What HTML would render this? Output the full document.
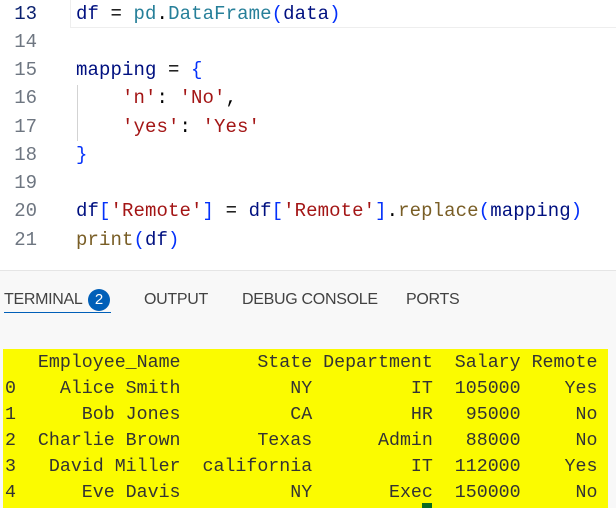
<!DOCTYPE html>
<html><head><meta charset="utf-8"><style>
html,body{margin:0;padding:0;width:616px;height:508px;overflow:hidden;background:#f8f8f8;position:relative}
.code{position:absolute;left:0;top:0;width:616px;height:270px;background:#fff}
.ln{position:absolute;left:0;width:37px;text-align:right;font:19px/28px "Liberation Mono",monospace;color:#6e7681}
.cl{position:absolute;left:76px;font:19px/28px "Liberation Mono",monospace;color:#000;white-space:pre;letter-spacing:0.1px}
.v{color:#001080}.t{color:#267f99}.s{color:#a31515}.f{color:#795e26}.b{color:#0431fa}
.hl{position:absolute;left:70px;top:0;width:546px;height:27px;border:1px solid #eeeeee;border-top:none}
.guide{position:absolute;left:77px;top:85px;width:1px;height:56px;background:#d3d3d3}
.sep{position:absolute;left:0;top:270px;width:616px;height:1px;background:#e5e5e5}
.tab{position:absolute;top:289px;font:16px/22px "Liberation Sans",sans-serif;color:#424242;letter-spacing:-0.3px}
.badge{position:absolute;left:88px;top:289px;width:22px;height:22px;border-radius:50%;background:#005fb8;color:#fff;font:15px/22px "Liberation Sans",sans-serif;text-align:center}
.ul{position:absolute;left:4px;top:312px;width:107px;height:1px;background:#005fb8}
.yel{position:absolute;left:3px;top:349px;width:605px;height:159px;background:#fbfb00}
.term{position:absolute;left:5px;top:350px;margin:0;font:18.3px/26px "Liberation Mono",monospace;color:#333;white-space:pre}
.cur{position:absolute;left:422px;top:503px;width:10px;height:5px;background:#0a6b1f}
</style></head><body>
<div class="code">
<div class="hl"></div>
<div class="ln" style="top:0;color:#0b216f">13</div>
<div class="ln" style="top:28px">14</div>
<div class="ln" style="top:56px">15</div>
<div class="ln" style="top:84px">16</div>
<div class="ln" style="top:113px">17</div>
<div class="ln" style="top:141px">18</div>
<div class="ln" style="top:169px">19</div>
<div class="ln" style="top:197px">20</div>
<div class="ln" style="top:226px">21</div>
<div class="cl" style="top:0"><span class="v">df</span> = <span class="t">pd</span>.<span class="t">DataFrame</span><span class="b">(</span><span class="v">data</span><span class="b">)</span></div>
<div class="cl" style="top:56px"><span class="v">mapping</span> = <span class="b">{</span></div>
<div class="guide"></div>
<div class="cl" style="top:84px">    <span class="s">'n'</span>: <span class="s">'No'</span>,</div>
<div class="cl" style="top:113px">    <span class="s">'yes'</span>: <span class="s">'Yes'</span></div>
<div class="cl" style="top:141px"><span class="b">}</span></div>
<div class="cl" style="top:197px"><span class="v">df</span><span class="b">[</span><span class="s">'Remote'</span><span class="b">]</span> = <span class="v">df</span><span class="b">[</span><span class="s">'Remote'</span><span class="b">]</span>.<span class="f">replace</span><span class="b">(</span><span class="v">mapping</span><span class="b">)</span></div>
<div class="cl" style="top:226px"><span class="f">print</span><span class="b">(</span><span class="v">df</span><span class="b">)</span></div>
</div>
<div class="sep"></div>
<div class="tab" style="left:4px">TERMINAL</div>
<div class="badge">2</div>
<div class="ul"></div>
<div class="tab" style="left:144px">OUTPUT</div>
<div class="tab" style="left:242px">DEBUG CONSOLE</div>
<div class="tab" style="left:406px">PORTS</div>
<div class="yel"></div>
<pre class="term">   Employee_Name       State Department  Salary Remote
0    Alice Smith          NY         IT  105000    Yes
1      Bob Jones          CA         HR   95000     No
2  Charlie Brown       Texas      Admin   88000     No
3   David Miller  california         IT  112000    Yes
4      Eve Davis          NY       Exec  150000     No</pre>
<div class="cur"></div>
</body></html>
